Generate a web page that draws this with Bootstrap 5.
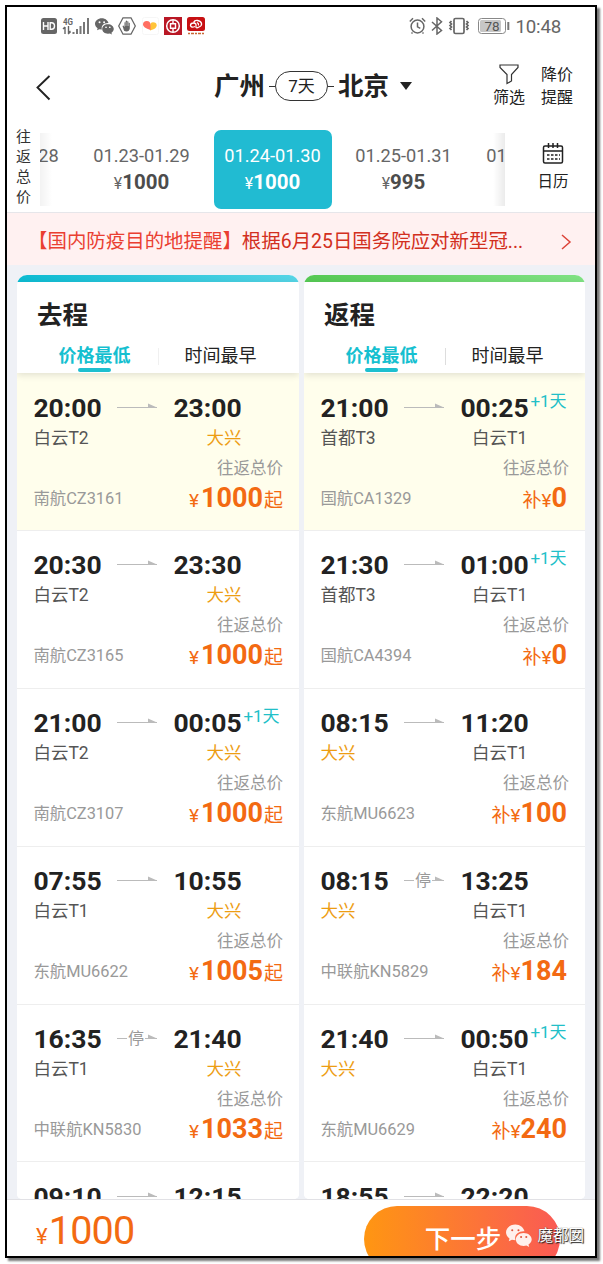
<!DOCTYPE html>
<html lang="zh-CN">
<head>
<meta charset="utf-8">
<meta name="viewport" content="width=device-width, initial-scale=1">
<title>广州 - 北京 往返机票</title>
<link href="https://cdn.jsdelivr.net/npm/bootstrap@5.3.0/dist/css/bootstrap.min.css" rel="stylesheet">
<style>
body{font-family:Roboto,"Noto Sans CJK SC",sans-serif;color:#222;background:#fff;line-height:1.2;height:1264px;overflow:hidden}
.phone{width:592px;height:1253px;margin:5px 0 0 5px;border:2px solid #000;box-shadow:3px 3px 2px #777;background:#fff}
svg{display:block;flex:none}
.status-bar{height:38px;padding:0 34px 0 34px;color:#666}
.clock{font-size:18.7px;letter-spacing:-.2px;padding-top:2px}
.top-nav{height:82px;padding:0 22px 0 28px}
.city{font-size:25.5px;font-weight:700;line-height:30px}
.days-pill{width:53px;height:30px;border:1px solid #333;border-radius:15px;font-size:17px}
.dash{width:6px;height:1px;background:#333}
.tool{font-size:16px;line-height:23px;width:32px;white-space:nowrap}
.date-strip{height:86px;border-bottom:1px solid #e6e6ea}
.strip-label{width:33px;padding:0 8px 0 9px;font-size:15px;line-height:20px;color:#333}
.scroller{width:465px;gap:13px;color:#666}
.date-tab{width:118px;height:79px;flex:none;border-radius:7px;font-size:18.2px;margin-top:3px;gap:3px}
.date-tab b{font-size:20.5px;color:#4c4c4c}
.date-tab.current,.date-tab.current b{color:#fff}
.date-tab.current{background:#21bbd2}
.yen{font-size:16px}
.fade-l,.fade-r{position:absolute;top:6px;bottom:6px;width:12px}
.fade-l{left:0;background:linear-gradient(90deg,#0000000d,#0000)}
.fade-r{right:0;background:linear-gradient(270deg,#00000014,#0000)}
.calendar{width:84px;font-size:15.5px;color:#222}
.notice{height:52px;background:#fff1f1;color:#d22f20;padding:5px 23px 0 21px;font-size:19.45px}
.notice-head{color:#ea3f31}
.board{height:934px;padding:10px 10px 0;background:#eff1f6;gap:5px}
.trip{width:282px;border-radius:10px 10px 5px 5px;height:924px}
.trip.back{width:281px}
.strip-top{height:7px;flex:none}
.out .strip-top{background:linear-gradient(90deg,#0cbbd2,#56d5e6)}
.back .strip-top{background:linear-gradient(90deg,#55c954,#80e284)}
.trip-head{height:91px;flex:none;padding:17px 0 0;box-shadow:0 2px 7px #0000001f;z-index:1}
.trip-title{font-size:25.5px;line-height:32px;font-weight:700;padding-left:20px}
.sort{font-size:18px;line-height:22px;height:26px;margin-top:14px}
.sort-item{width:125px;white-space:nowrap}
.sort .sort-item:first-child{margin-left:15px;margin-right:1px}
.chosen{color:#15c0d0;font-weight:700}
.mark-bar{width:33px;height:4px;border-radius:2px;background:#1dbfcf;margin:1px auto 0}
.divide{width:1px;height:17px;background:#ddd;margin:3px -1px 0 0}
.out .divide{background:#f0f0f0}
.flight{height:157.9px;flex:none;padding:19.5px 16px 0 16.4px;border-bottom:1px solid #eee;background:#fff;line-height:30px;white-space:nowrap}
.flight.picked{background:#fffeec}
.hhmm{font-size:26.5px;font-weight:700;width:68px}
.route{width:40px;height:30px;margin:0 16px}
.place{font-size:17.5px;color:#555;width:68px}
.place+.place{margin-left:72px;text-align:right}
.place+.place:not(.daxing){padding-right:1px}
.daxing{color:#ed9d13}
.plus{position:absolute;left:70px;top:-7px;font-size:17px;font-weight:400;color:#22bfc8}
.total{font-size:16.5px;color:#999;padding-top:1px}
.code{font-size:16.4px;color:#999}
.fare{color:#f36a12;font-size:19px;margin-top:-1px}
.fare b{font-size:27px;line-height:30px}
.out .fare b{margin:0 1px 0 2px}
.back .fare{padding-right:2px}
.pay-bar{border-top:1px solid #e1e1e5;height:57px;padding-left:29px}
.amount{color:#f36a12;font-size:39.5px;line-height:46px;margin-top:8px;letter-spacing:-.8px}
.amount small{font-size:22px;margin-right:2px}
.pay-note{font-size:16px;line-height:20px;margin-top:-3px;color:#777}
.next-btn{position:absolute;left:357px;top:6px;width:196px;height:66px;border-radius:33px;background:linear-gradient(90deg,#ff9612,#fa5a55);color:#fff;font-size:25.5px;font-weight:500;line-height:30px;padding:18px 0 0 2px;text-align:center}
.next-sub{font-size:13px;line-height:18px;margin-top:0}
.watermark{position:absolute;right:11px;top:24px;gap:5px;color:#fff;font-size:15.5px;line-height:24px;text-shadow:1px 1px 1px #222,0 0 1px #333}
</style>
</head>
<body>
<main class="phone d-flex flex-column overflow-hidden">
  <header class="status-bar d-flex align-items-center">
    <svg width="16" height="16"><rect width="16" height="16" rx="2.5" fill="#666"/><path d="M2.500 4v8M7 4v8M2.500 8H7M9.200 4.700v6.600h1.300q3 0 3-3.300t-3-3.300z" fill="none" stroke="#fff" stroke-width="1.400"/></svg>
    <svg style="margin-left:5px" width="29" height="20"><text x="1" y="8.500" font-size="9.500" font-weight="700" textLength="10" lengthAdjust="spacingAndGlyphs" fill="#666">4G</text><path d="M3 11v7M1 13l2-2M6.500 10v6.500l2-1.500M6 18l2.500-2" fill="none" stroke="#666" stroke-width="1.400"/><path d="M10.500 16h2v2h-2zM14 13h2v5h-2zM17.500 10h2v8h-2zM21 6h2v12h-2zM25 2h2v16h-2z" fill="#777"/></svg>
    <svg class="ms-1" width="19" height="17" viewBox="0 0 25 22"><path d="M9 0C4 0 0 3.300 0 7.500c0 2.500 1.300 4.500 3.400 5.800L2.700 16l3-1.500 3.400.5c-1.600-5 3-9 8.700-8.500C17 3 13.500 0 9 0zM17 8c-4.500 0-7.500 2.800-7.500 6.300s3.200 6.200 7.500 6.200l2.600-.4 2.700 1.400-.7-2.300c1.900-1.200 3.100-2.900 3.100-4.900C24.700 10.800 21.400 8 17 8z" fill="#666"/><g fill="#fff"><circle cx="6" cy="5.500" r="1.300"/><circle cx="12" cy="5.500" r="1.300"/><circle cx="14.500" cy="12" r="1.100"/><circle cx="19.500" cy="12" r="1.100"/></g></svg>
    <svg style="margin-left:4px" width="18" height="18"><path d="M5 .8h8L17.300 9 13 17.200H5L.7 9z" fill="none" stroke="#666" stroke-width="1.300"/><path d="M4.500 9l1-.5 1 1.500V5.500q.7-.8 1.200 0V4q.7-.8 1.400 0v.7q.8-.7 1.400 0V6q.8-.6 1.300 0v5.500q-.5 3-3.300 3T5.500 12z" fill="#666"/><path d="M7.800 5v4M9.200 5v4M10.600 5.500V9" stroke="#fff" stroke-width=".4"/></svg>
    <svg style="margin-left:6px" width="17" height="18"><rect x=".5" y=".5" width="16" height="17" rx="2" fill="#fff" stroke="#f6f6f6"/><path d="M8 13.500V9q0-3.800 3-3.800 3.700 0 3.700 3.300T8 13.500z" fill="#ffc439"/><path d="M8.500 13Q1 10.500 1 7.500 1 4 4.800 4q3.700 0 3.700 4z" fill="#ff6e61"/></svg>
    <svg style="margin-left:5px" width="18" height="18"><rect width="18" height="18" fill="#b91725"/><circle cx="9" cy="9" r="6.300" fill="none" stroke="#fff" stroke-width="1.500"/><path d="M9 2.700v3.800M9 11.500v3.800M6.500 6.700h5v4.600h-5z" fill="none" stroke="#fff" stroke-width="1.400"/></svg>
    <svg style="margin-left:5px" width="18" height="18"><rect width="18" height="14" rx="2.500" fill="#c71013"/><path d="M8 9.500Q4 11 3.500 8.500 3.500 6 6.500 6T9 9t3 1q3-1 2.500-3.500T10.500 3.500 6.800 6M10 5.500q2 1 1.500 3" fill="none" stroke="#fff" stroke-width="1.300"/><path d="M1 16.500h16" stroke="#c96735" stroke-width="1.500" stroke-dasharray="2 1 3 1"/></svg>
    <svg class="ms-auto" width="17" height="18" fill="none" stroke="#666" stroke-width="1.500"><circle cx="8.500" cy="9.500" r="6.400"/><path d="M8.500 5.500v4.300l2.800 1.500M.8 4.500L4 1.300M16.200 4.500L13 1.300M3.500 15.500l-1 1M13.500 15.500l1 1"/></svg>
    <svg style="margin-left:5px" width="12" height="18"><path d="M1 5l9.500 8.500L6 17V1l4.500 3.700L1 13.500" fill="none" stroke="#666" stroke-width="1.500"/></svg>
    <svg style="margin-left:5px" width="22" height="18" fill="none" stroke="#666" stroke-width="1.700"><rect x="6" y="1.500" width="10" height="15" rx="1.500"/><path d="M3.500 4L2 5.500 3.500 7 2 8.500 3.500 10 2 11.500 3.500 13M18.500 4L20 5.500 18.500 7 20 8.500 18.500 10 20 11.500 18.500 13"/></svg>
    <svg style="margin-left:8px;margin-right:5px" width="32" height="16"><rect x=".5" y=".5" width="27" height="15" rx="3" fill="#fff" stroke="#888"/><rect x="2" y="2" width="21" height="12" rx="1.500" fill="#c6c6c6"/><path d="M30.300 4v8" stroke="#777" stroke-width="2"/><text x="14" y="13" text-anchor="middle" font-size="13.500" fill="#555">78</text></svg>
    <span class="clock">10:48</span>
  </header>

  <nav class="top-nav d-flex align-items-center">
    <svg class="mt-1" width="16" height="28"><path d="M14.500 2L2.500 13.500l12 12" fill="none" stroke="#222" stroke-width="1.900"/></svg>
    <div class="d-flex align-items-center" style="margin-left:163px">
      <span class="city">广州</span>
      <span class="dash ms-1"></span>
      <span class="days-pill d-flex align-items-center justify-content-center">7天</span>
      <span class="dash me-1"></span>
      <span class="city">北京</span>
      <svg style="margin-left:9px" width="16" height="10"><path d="M2 1h12L8 9z" fill="#222"/></svg>
    </div>
    <div class="tool ms-auto d-flex flex-column align-items-center">
      <svg width="20" height="23"><path d="M1 2h18v2.500l-6.500 7V18L8 20.500v-9L1 4.500z" fill="none" stroke="#333" stroke-width="1.200"/></svg>
      <span>筛选</span>
    </div>
    <div class="tool" style="margin-left:16px">降价<br>提醒</div>
  </nav>

  <section class="date-strip d-flex">
    <div class="strip-label">往返总价</div>
    <div class="scroller d-flex justify-content-center position-relative overflow-hidden" id="dates">
      <div class="fade-l"></div><div class="fade-r"></div>
    </div>
    <div class="calendar ms-auto d-flex flex-column align-items-center">
      <svg style="margin:16px 0 8px" width="22" height="22" fill="none" stroke="#222" stroke-width="1.500"><rect x="1.500" y="3" width="19" height="17" rx="1.500"/><path d="M1.500 8h19M6.500 0v5M11 0v5M15.500 0v5"/><path d="M5 12h13M5 16h13" stroke-dasharray="2.500 1.500"/></svg>
      <span>日历</span>
    </div>
  </section>

  <section class="notice d-flex align-items-center">
    <span class="text-nowrap"><span class="notice-head">【国内防疫目的地提醒】</span>根据6月25日国务院应对新型冠...</span>
    <svg class="ms-auto" width="12" height="18"><path d="M2 2l8 7-8 7" fill="none" stroke="#dc4439" stroke-width="1.500"/></svg>
  </section>

  <section class="board d-flex">
    <article class="trip out d-flex flex-column overflow-hidden bg-white" id="out">
      <div class="strip-top"></div>
      <div class="trip-head position-relative">
        <div class="trip-title">去程</div>
        <div class="sort d-flex text-center">
          <div class="sort-item chosen">价格最低<div class="mark-bar"></div></div><i class="divide"></i><div class="sort-item">时间最早</div>
        </div>
      </div>
    </article>
    <article class="trip back d-flex flex-column overflow-hidden bg-white" id="back">
      <div class="strip-top"></div>
      <div class="trip-head position-relative">
        <div class="trip-title">返程</div>
        <div class="sort d-flex text-center">
          <div class="sort-item chosen">价格最低<div class="mark-bar"></div></div><i class="divide"></i><div class="sort-item">时间最早</div>
        </div>
      </div>
    </article>
  </section>

  <footer class="pay-bar position-relative">
    <div class="amount"><small>¥</small>1000</div>
    <div class="pay-note">往返总价</div>
    <div class="next-btn">下一步<div class="next-sub">含税价格</div></div>
    <div class="watermark d-flex align-items-center">
      <svg width="26" height="24" viewBox="0 0 25 22"><path d="M9 0C4 0 0 3.300 0 7.500c0 2.500 1.300 4.500 3.400 5.800L2.700 16l3-1.500 3.400.5c-1.600-5 3-9 8.700-8.500C17 3 13.500 0 9 0zM17 8c-4.500 0-7.500 2.800-7.500 6.300s3.200 6.200 7.500 6.200l2.600-.4 2.700 1.400-.7-2.300c1.900-1.200 3.100-2.900 3.100-4.900C24.700 10.800 21.400 8 17 8z" fill="#fff0ec"/><g fill="#e0553c"><circle cx="6" cy="5.500" r="1"/><circle cx="12" cy="5.500" r="1"/><circle cx="14.500" cy="12" r="1"/><circle cx="19.500" cy="12" r="1"/></g></svg>
      <span>魔都囡</span>
    </div>
  </footer>
</main>

<script src="https://cdn.jsdelivr.net/npm/bootstrap@5.3.0/dist/js/bootstrap.bundle.min.js"></script>
<script>
const dates = [['01.22-01.28','1000'],['01.23-01.29','1000'],['01.24-01.30','1000'],['01.25-01.31','995'],['01.26-02.01','1000']];
// the outermost tabs are scrolled past the edge, where their prices are out of view
document.getElementById('dates').insertAdjacentHTML('afterbegin', dates.map(([d, p], i) =>
  `<div class="date-tab d-flex flex-column align-items-center justify-content-center${i === 2 ? ' current' : ''}"><span>${d}</span><span style="visibility:${i % 4 ? 'visible' : 'hidden'}"><span class="yen">¥</span><b>${p}</b></span></div>`).join(''));

// departure, arrival, next day, from, to, flight number, price, stopover
const out = [
  ['20:00','23:00',0,'白云T2','大兴','南航CZ3161','1000'],
  ['20:30','23:30',0,'白云T2','大兴','南航CZ3165','1000'],
  ['21:00','00:05',1,'白云T2','大兴','南航CZ3107','1000'],
  ['07:55','10:55',0,'白云T1','大兴','东航MU6622','1005'],
  ['16:35','21:40',0,'白云T1','大兴','中联航KN5830','1033',1],
  ['09:10','12:15',0]];
const back = [
  ['21:00','00:25',1,'首都T3','白云T1','国航CA1329','0'],
  ['21:30','01:00',1,'首都T3','白云T1','国航CA4394','0'],
  ['08:15','11:20',0,'大兴','白云T1','东航MU6623','100'],
  ['08:15','13:25',0,'大兴','白云T1','中联航KN5829','184',1],
  ['21:40','00:50',1,'大兴','白云T1','东航MU6629','240'],
  ['18:55','22:20',0]];
const arrow = stop => stop
  ? '<svg class="route" viewBox="0 0 40 30"><path d="M0 14.500h10M28 14.500h12" stroke="#bbb"/><path d="M31 10.500v4h9z" fill="#bbb"/><text x="19" y="19.500" font-size="16" text-anchor="middle" fill="#999">停</text></svg>'
  : '<svg class="route" viewBox="0 0 40 30"><path d="M0 14.500h40" stroke="#bbb"/><path d="M31 10.500v4h9z" fill="#bbb"/></svg>';
const place = p => `<span class="place${p === '大兴' ? ' daxing' : ''}">${p}</span>`;
const details = (id, f) => f[3] ? `
      <div class="d-flex">${place(f[3])}${place(f[4])}</div>
      <div class="total text-end">往返总价</div>
      <div class="d-flex justify-content-between"><span class="code">${f[5]}</span><span class="fare">${id === 'out' ? `¥<b>${f[6]}</b>起` : `补¥<b>${f[6]}</b>`}</span></div>` : '';
function fill(id, list) {
  document.getElementById(id).insertAdjacentHTML('beforeend', list.map((f, i) => `
    <div class="flight${i ? '' : ' picked'}">
      <div class="d-flex"><span class="hhmm">${f[0]}</span>${arrow(f[7])}<span class="hhmm position-relative">${f[1]}${f[2] ? '<span class="plus">+1天</span>' : ''}</span></div>${details(id, f)}
    </div>`).join(''));
}
fill('out', out);
fill('back', back);
</script>
</body>
</html>
